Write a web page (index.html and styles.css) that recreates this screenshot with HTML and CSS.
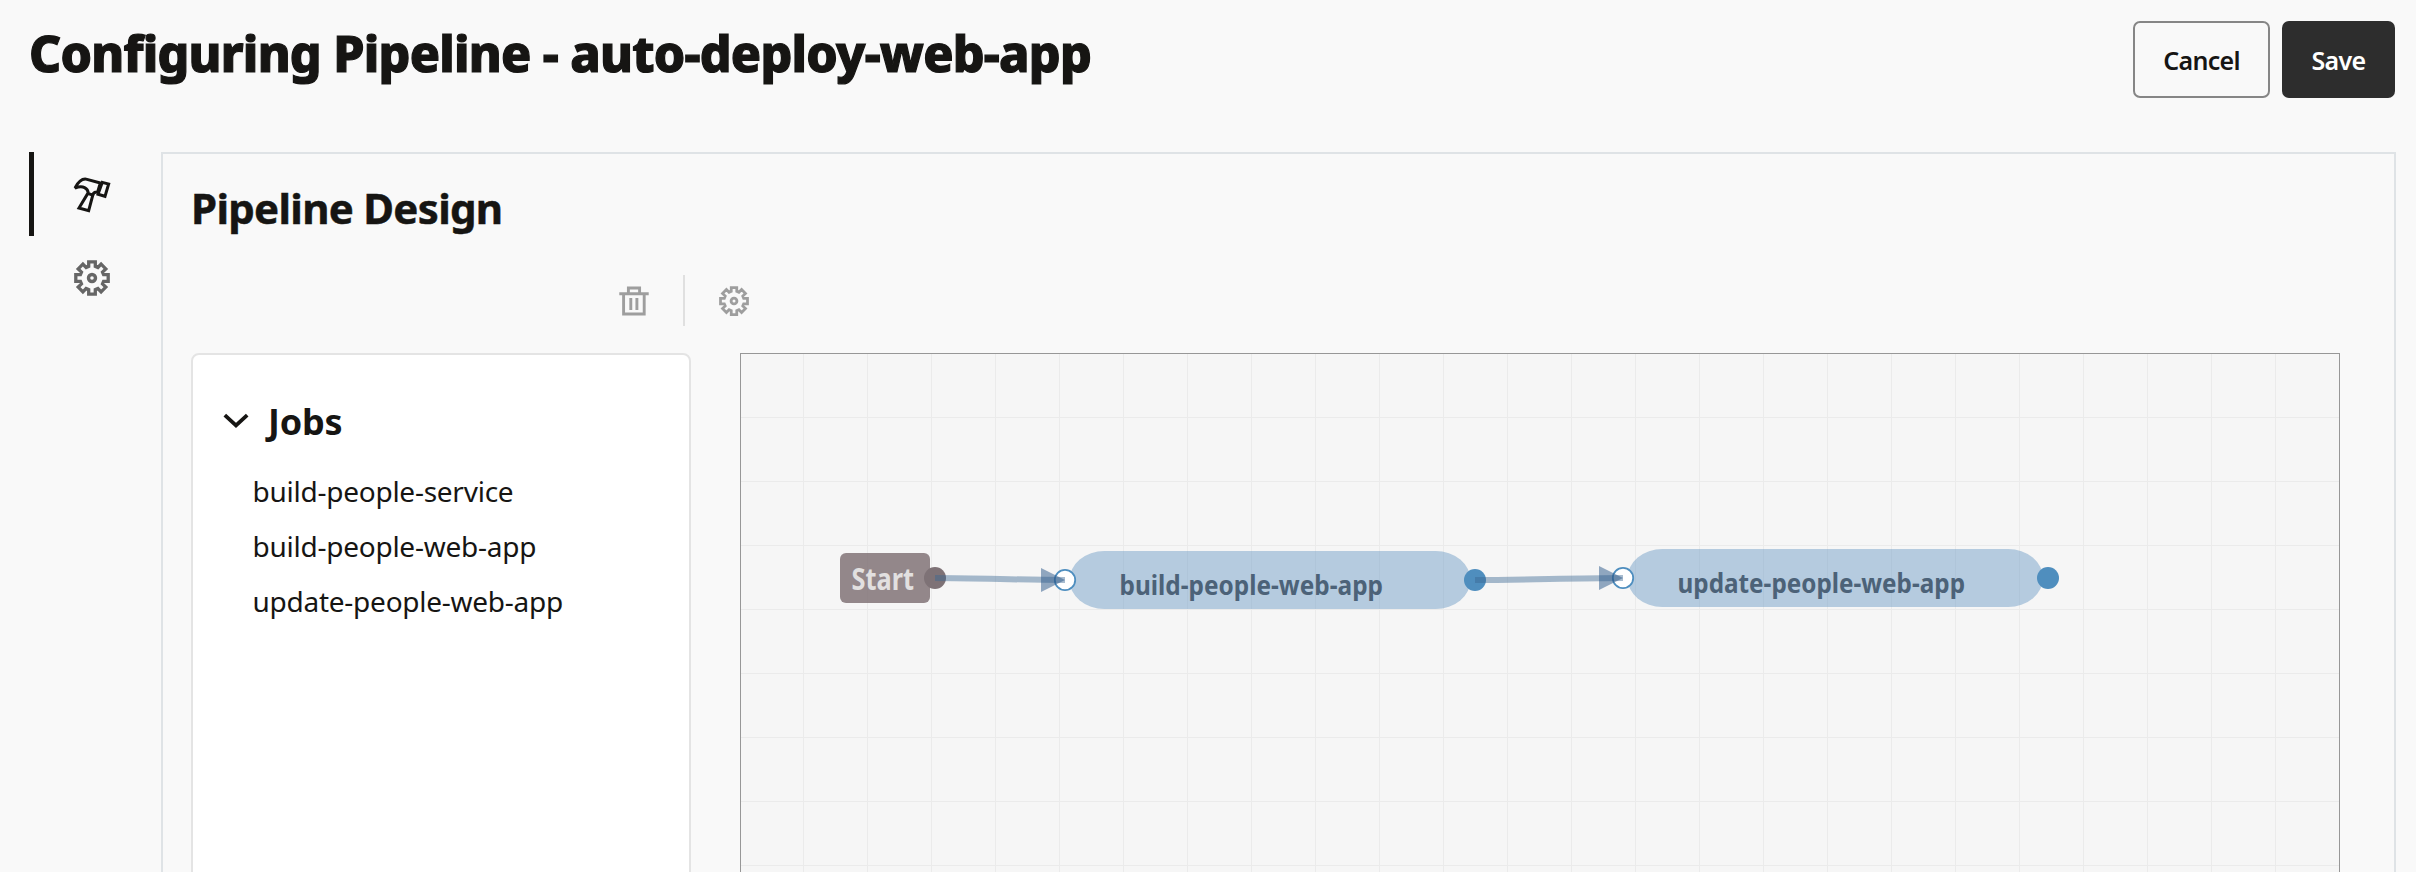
FILE: index.html
```html
<!DOCTYPE html>
<html lang="en">
<head>
<meta charset="utf-8">
<title>Configuring Pipeline</title>
<link rel="stylesheet" href="styles.css">
</head>
<body>
<svg class="defs" width="0" height="0" aria-hidden="true">
  <symbol id="gear" viewBox="-18 -18 36 36">
    <path fill="none" stroke="currentColor" stroke-width="3.3" d="M-3.3-11.6V-16.2H3.3V-11.6L5.9-10.5L9.1-13.8L13.8-9.1L10.5-5.9L11.6-3.3H16.2V3.3H11.6L10.5 5.9L13.8 9.1L9.1 13.8L5.9 10.5L3.3 11.6V16.2H-3.3V11.6L-5.9 10.5L-9.1 13.8L-13.8 9.1L-10.5 5.9L-11.6 3.3H-16.2V-3.3H-11.6L-10.5-5.9L-13.8-9.1L-9.1-13.8L-5.9-10.5Z"/>
    <circle r="3.5" fill="none" stroke="currentColor" stroke-width="3.4"/>
  </symbol>
</svg>
<header class="header">
  <h1 class="title">Configuring Pipeline - auto-deploy-web-app</h1>
  <div class="actions">
    <button class="btn btn-cancel">Cancel</button>
    <button class="btn btn-save">Save</button>
  </div>
</header>
<div class="layout">
  <nav class="rail">
    <a class="rail-item active">
      <svg class="hammer" viewBox="155 105 120 115" fill="none" stroke="currentColor" stroke-width="9">
        <path stroke-linejoin="bevel" d="M164 141C173 124 184 111 200 115L240 126L232 153C224 152 219 156 217 162L204 158C203 141 188 132 164 141Z"/>
        <path d="M246 124L265 129L254 166L233 160Z"/>
        <path d="M202 158L176 201L205 209L218 160"/>
      </svg>
    </a>
    <a class="rail-item"><svg class="rail-gear"><use href="#gear"/></svg></a>
  </nav>
  <main class="panel">
    <h2 class="panel-title">Pipeline Design</h2>
    <div class="toolbar">
      <svg class="trash" viewBox="0 0 30 30" fill="none" stroke="currentColor" stroke-width="2.9">
        <path d="M.3 7.7H29.7M4.6 7.700V28H25.2V7.700M9.4 7.700V2H20.6V7.700M11.8 12V24M17.9 12V24"/>
      </svg>
      <span class="divider"></span>
      <svg class="tool-gear"><use href="#gear"/></svg>
    </div>
    <div class="workspace">
      <aside class="jobs">
        <h3 class="jobs-title">
          <svg class="chevron" viewBox="0 0 26 16" fill="none" stroke="currentColor" stroke-width="3.8"><path d="M1.8 2.2L13 12.4L24.2 2.2"/></svg>
          <span>Jobs</span>
        </h3>
        <ul class="job-list">
          <li class="job">build-people-service</li>
          <li class="job">build-people-web-app</li>
          <li class="job">update-people-web-app</li>
        </ul>
      </aside>
      <section class="canvas">
        <svg class="diagram" viewBox="741 354 1598 518">
          <rect class="start" x="840" y="553" width="90" height="50" rx="6"/>
          <text class="start-label" x="851.5" y="589.5" textLength="62.5" lengthAdjust="spacingAndGlyphs">Start</text>
          <rect class="node" x="1069.5" y="551" width="401" height="58" rx="35" ry="29"/>
          <text class="node-label" x="1119.5" y="594.5" textLength="263.5" lengthAdjust="spacingAndGlyphs">build-people-web-app</text>
          <rect class="node" x="1627.5" y="549" width="415.5" height="58" rx="35" ry="29"/>
          <text class="node-label" x="1677.5" y="592.5" textLength="287.5" lengthAdjust="spacingAndGlyphs">update-people-web-app</text>
          <circle class="start-port" cx="935" cy="578" r="11"/>
          <circle class="port-in" cx="1065" cy="580" r="10.2"/>
          <circle class="port-out" cx="1475" cy="580" r="11"/>
          <circle class="port-in" cx="1623" cy="578" r="10.2"/>
          <circle class="port-out" cx="2048" cy="578" r="11"/>
          <path class="link" d="M935 578C980 578 1020 580 1065 580"/>
          <path class="link" d="M1475 580C1525 580 1573 578 1623 578"/>
          <path class="arrow" d="M1041 568L1065 580L1041 592Z"/>
          <path class="arrow" d="M1599 566L1623 578L1599 590Z"/>
        </svg>
      </section>
    </div>
  </main>
</div>
</body>
</html>
```

FILE: styles.css
```css
* { box-sizing: border-box; }
body {
  margin: 0;
  height: 872px;
  overflow: hidden;
  background: #f9f9f9;
  color: #161513;
  font-family: "Noto Sans", "Open Sans", sans-serif;
}
h1, h2, h3, ul { margin: 0; padding: 0; }
.defs { display: block; }
.header {
  display: flex;
  justify-content: space-between;
  height: 152px;
  padding: 21px 21px 0 29px;
}
.title {
  font-size: 50px;
  font-weight: 800;
  line-height: 64px;
  letter-spacing: -0.75px;
  white-space: nowrap;
  -webkit-text-stroke: 1.2px #161513;
}
.actions { display: flex; gap: 12px; }
.btn {
  height: 77px;
  padding: 0;
  border-radius: 7px;
  font-family: inherit;
  font-size: 25px;
  font-weight: 600;
  line-height: 36px;
  letter-spacing: -0.7px;
}
.btn-cancel { width: 137px; border: 2px solid #868686; background: transparent; color: #161513; }
.btn-save { width: 113px; border: 0; background: #2d2d2d; color: #fff; }
.layout { display: flex; height: 720px; padding: 0 21px 0 29px; }
.rail { width: 132px; flex: none; }
.rail-item {
  display: flex;
  align-items: center;
  height: 84px;
  border-left: 5px solid transparent;
  color: #666;
}
.rail-item.active { border-left-color: #161513; color: #161513; }
.hammer { width: 40px; height: 38.3px; margin: 2px 0 0 38px; }
.rail-gear { width: 36px; height: 36px; margin-left: 40px; }
.panel {
  flex: 1;
  height: 760px;
  padding: 0 54px 0 28px;
  border: 2px solid #dfe3e6;
}
.panel-title {
  height: 121px;
  padding-top: 27px;
  font-size: 42px;
  font-weight: 700;
  line-height: 54px;
  letter-spacing: -0.7px;
  -webkit-text-stroke: 0.5px #161513;
}
.toolbar {
  display: flex;
  align-items: center;
  height: 78px;
  padding: 0 0 27px 428px;
  color: #9e9e9e;
}
.trash { width: 30px; height: 30px; }
.divider { width: 2px; height: 51px; margin: 0 34px; background: #e0e0e0; }
.tool-gear { width: 30px; height: 30px; }
.workspace { display: flex; gap: 49px; height: 560px; }
.jobs {
  width: 500px;
  flex: none;
  padding: 41px 0 0 30px;
  border: 2px solid #e4e4e4;
  border-radius: 8px;
  background: #fff;
}
.jobs-title {
  display: flex;
  align-items: center;
  gap: 19px;
  height: 50px;
  font-size: 36px;
  letter-spacing: -0.2px;
}
.chevron { width: 26px; height: 16px; }
.job-list { padding: 18px 0 0 29.5px; list-style: none; }
.job { height: 55px; font-size: 28px; line-height: 55px; letter-spacing: -0.25px; }
.canvas {
  width: 1600px;
  flex: none;
  border: 1px solid #979797;
  background-color: #f6f6f6;
  background-image:
    linear-gradient(to right, #ebebeb 1px, transparent 1px),
    linear-gradient(to bottom, #ebebeb 1px, transparent 1px);
  background-size: 64px 64px;
  background-position: 62px 63px;
}
.diagram { display: block; width: 1598px; height: 518px; }
.start { fill: rgba(122, 107, 111, 0.8); }
.start-label { fill: #e2e0e0; font-size: 29.5px; font-weight: 700; }
.start-port { fill: #7e7276; }
.node { fill: rgba(116, 160, 200, 0.5); }
.node-label { fill: #4c6278; font-size: 27px; font-weight: 700; }
.port-in { fill: #fff; stroke: #4e8ebf; stroke-width: 1.8; }
.port-out { fill: #4f8ebe; }
.link { fill: none; stroke: rgba(58, 102, 145, 0.44); stroke-width: 6; }
.arrow { fill: rgba(40, 86, 136, 0.5); }
```
